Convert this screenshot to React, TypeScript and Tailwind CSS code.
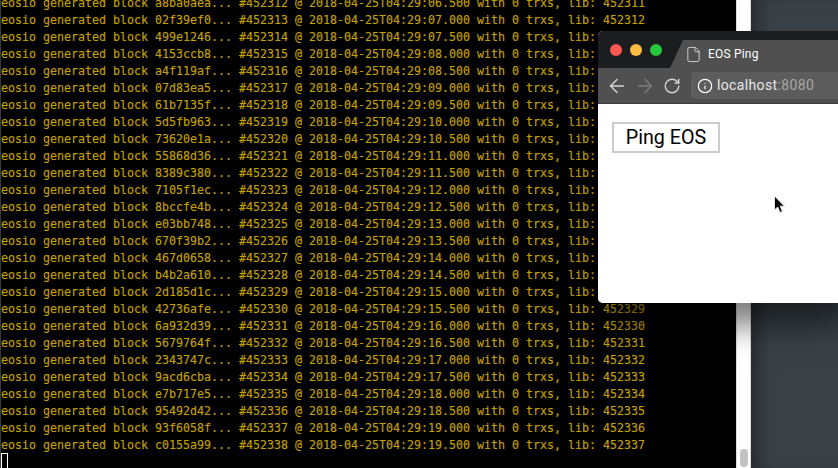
import { ArrowLeft, ArrowRight, File, Info, RotateCw } from "lucide-react";

const hashes = [
  "a8ba0aea", "02f39ef0", "499e1246", "4153ccb8", "a4f119af", "07d83ea5", "61b7135f",
  "5d5fb963", "73620e1a", "55868d36", "8389c380", "7105f1ec", "8bccfe4b", "e03bb748",
  "670f39b2", "467d0658", "b4b2a610", "2d185d1c", "42736afe", "6a932d39", "5679764f",
  "2343747c", "9acd6cba", "e7b717e5", "95492d42", "93f6058f", "c0155a99",
];

function logLine(hash: string, i: number) {
  const block = 452312 + i;
  const half = 13 + i; // half seconds since 04:29:00
  const sec = String(Math.floor(half / 2)).padStart(2, "0");
  const ms = half % 2 ? "500" : "000";
  return `eosio generated block ${hash}... #${block} @ 2018-04-25T04:29:${sec}.${ms} with 0 trxs, lib: ${block - 1}`;
}

function Terminal() {
  return (
    <div className="w-[736px] shrink-0 h-full overflow-hidden bg-black border-l border-[#3a3a3a] font-['DejaVu_Sans_Mono',monospace] text-[11.63px] leading-[17px] text-[#c4a000] [-webkit-text-stroke:0.15px_#c4a000] whitespace-pre">
      <div className="-mt-[5px]">
        {hashes.map((h, i) => (
          <div key={h}>{logLine(h, i)}</div>
        ))}
      </div>
      <div className="w-[7px] h-[16px] -mt-[1px] border border-white" />
    </div>
  );
}

function BrowserWindow() {
  return (
    <div className="absolute left-[598px] top-[31px] w-[260px] h-[272px] flex flex-col rounded-[5px] overflow-hidden bg-white shadow-[0_32px_30px_-10px_rgba(0,0,0,0.52)] font-['Roboto',sans-serif]">
      {/* tab strip */}
      <div className="h-[37px] bg-[#1c1d1f] flex items-end">
        <div className="flex gap-[8px] pl-[12px] pb-[12px]">
          <span className="w-[12px] h-[12px] rounded-full bg-[#fc5753]" />
          <span className="w-[12px] h-[12px] rounded-full bg-[#fdbc40]" />
          <span className="w-[12px] h-[12px] rounded-full bg-[#27c83f]" />
        </div>
        <div className="ml-[8px] flex-1 h-[28px] bg-[#505050] [clip-path:polygon(13px_0,100%_0,100%_100%,0_100%)] flex items-center pl-[15px] gap-[6px] text-white text-[12px]">
          <File size={17} strokeWidth={1.3} className="text-[#d8d8d8]" />
          <span className="tracking-[0.2px]">EOS Ping</span>
        </div>
      </div>
      {/* toolbar */}
      <div className="h-[36px] bg-[#505050] border-b border-[#3c3c3c] flex items-center pl-[8px]">
        <ArrowLeft size={22} strokeWidth={1.6} className="text-[#d4d4d4]" />
        <ArrowRight size={22} strokeWidth={1.6} className="ml-[6px] text-[#7d7d7d]" />
        <RotateCw size={18} strokeWidth={1.8} className="ml-[7px] text-[#d4d4d4]" />
        <div className="ml-[10px] flex-1 h-[27px] bg-[#5c5c5c] rounded-l-[4px] flex items-center pl-[6px] gap-[4px] text-[14px]">
          <Info size={16} strokeWidth={1.8} className="text-white" />
          <span className="text-[#e8e8e8] tracking-[0.36px]">
            localhost<span className="text-[#a8a8a8]">:8080</span>
          </span>
        </div>
      </div>
      {/* page */}
      <div className="relative flex-1 pl-[14px] pt-[18px] bg-white">
        <button className="w-[108px] h-[31px] border-2 border-[#cccccc] bg-white text-black text-[19.7px] leading-none font-['Roboto',sans-serif]">
          Ping EOS
        </button>
        <svg className="absolute left-[175px] top-[91px]" width="13" height="19" viewBox="0 0 13 19">
          <path d="M1.5 1 V15 L4.7 12 L7 17.5 L9.5 16.5 L7.2 11.2 H11.5 Z" fill="#000" stroke="#e8e8e8" strokeWidth="1" />
        </svg>
      </div>
    </div>
  );
}

export default function App() {
  return (
    <main className="relative w-[838px] h-[468px] overflow-hidden flex bg-black">
      <Terminal />
      <div className="w-[15px] shrink-0 h-full bg-white border-x border-[#dcdcdc] flex flex-col justify-end items-center pb-[1px]">
        <div className="w-[8px] h-[18px] rounded-full bg-[#c2c2c2]" />
      </div>
      <div className="flex-1 h-full bg-[#3a4147] shadow-[inset_14px_0_16px_-6px_rgba(0,0,0,0.35)]" />
      <BrowserWindow />
    </main>
  );
}
